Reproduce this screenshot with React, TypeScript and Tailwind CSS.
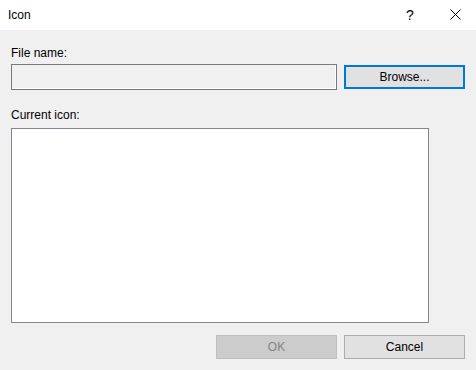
export default function App() {
  return (
    <div className="w-[476px] h-[370px] bg-[#f0f0f0] text-[12px] leading-[15px] text-black font-['Liberation_Sans',Arial,sans-serif] overflow-hidden">
      {/* title bar */}
      <div className="h-[30px] bg-white flex items-center pl-[8px]">
        <span className="flex-1">Icon</span>
        <span className="w-[20px] text-center mr-[10px] text-[14px]">?</span>
        <svg width="46" height="30" viewBox="0 0 46 30" className="shrink-0">
          <path d="M20.5 9.5 L30.5 19.5 M30.5 9.5 L20.5 19.5" stroke="#000" strokeWidth="1" fill="none" />
        </svg>
      </div>

      <div className="pl-[11px] pr-[11px]">
        <div className="mt-[16px]">File name:</div>
        <div className="mt-[3px] flex items-center h-[26px]">
          <div className="w-[326px] h-[26px] border border-[#7a7a7a] bg-[#f0f0f0] shadow-[inset_-1px_-1px_0_#fff]" />
          <button className="ml-[7px] w-[121px] h-[24px] border-2 border-[#0078d7] bg-[#e1e1e1] text-black">
            Browse...
          </button>
        </div>

        <div className="mt-[18px]">Current icon:</div>
        <div className="mt-[5px] w-[418px] h-[195px] border border-[#828790] bg-white" />

        <div className="mt-[12px] flex justify-end">
          <button className="w-[121px] h-[24px] border border-[#bfbfbf] bg-[#cccccc] text-[#838383]">OK</button>
          <button className="ml-[7px] w-[121px] h-[24px] border border-[#adadad] bg-[#e1e1e1] text-black">Cancel</button>
        </div>
      </div>
    </div>
  );
}
